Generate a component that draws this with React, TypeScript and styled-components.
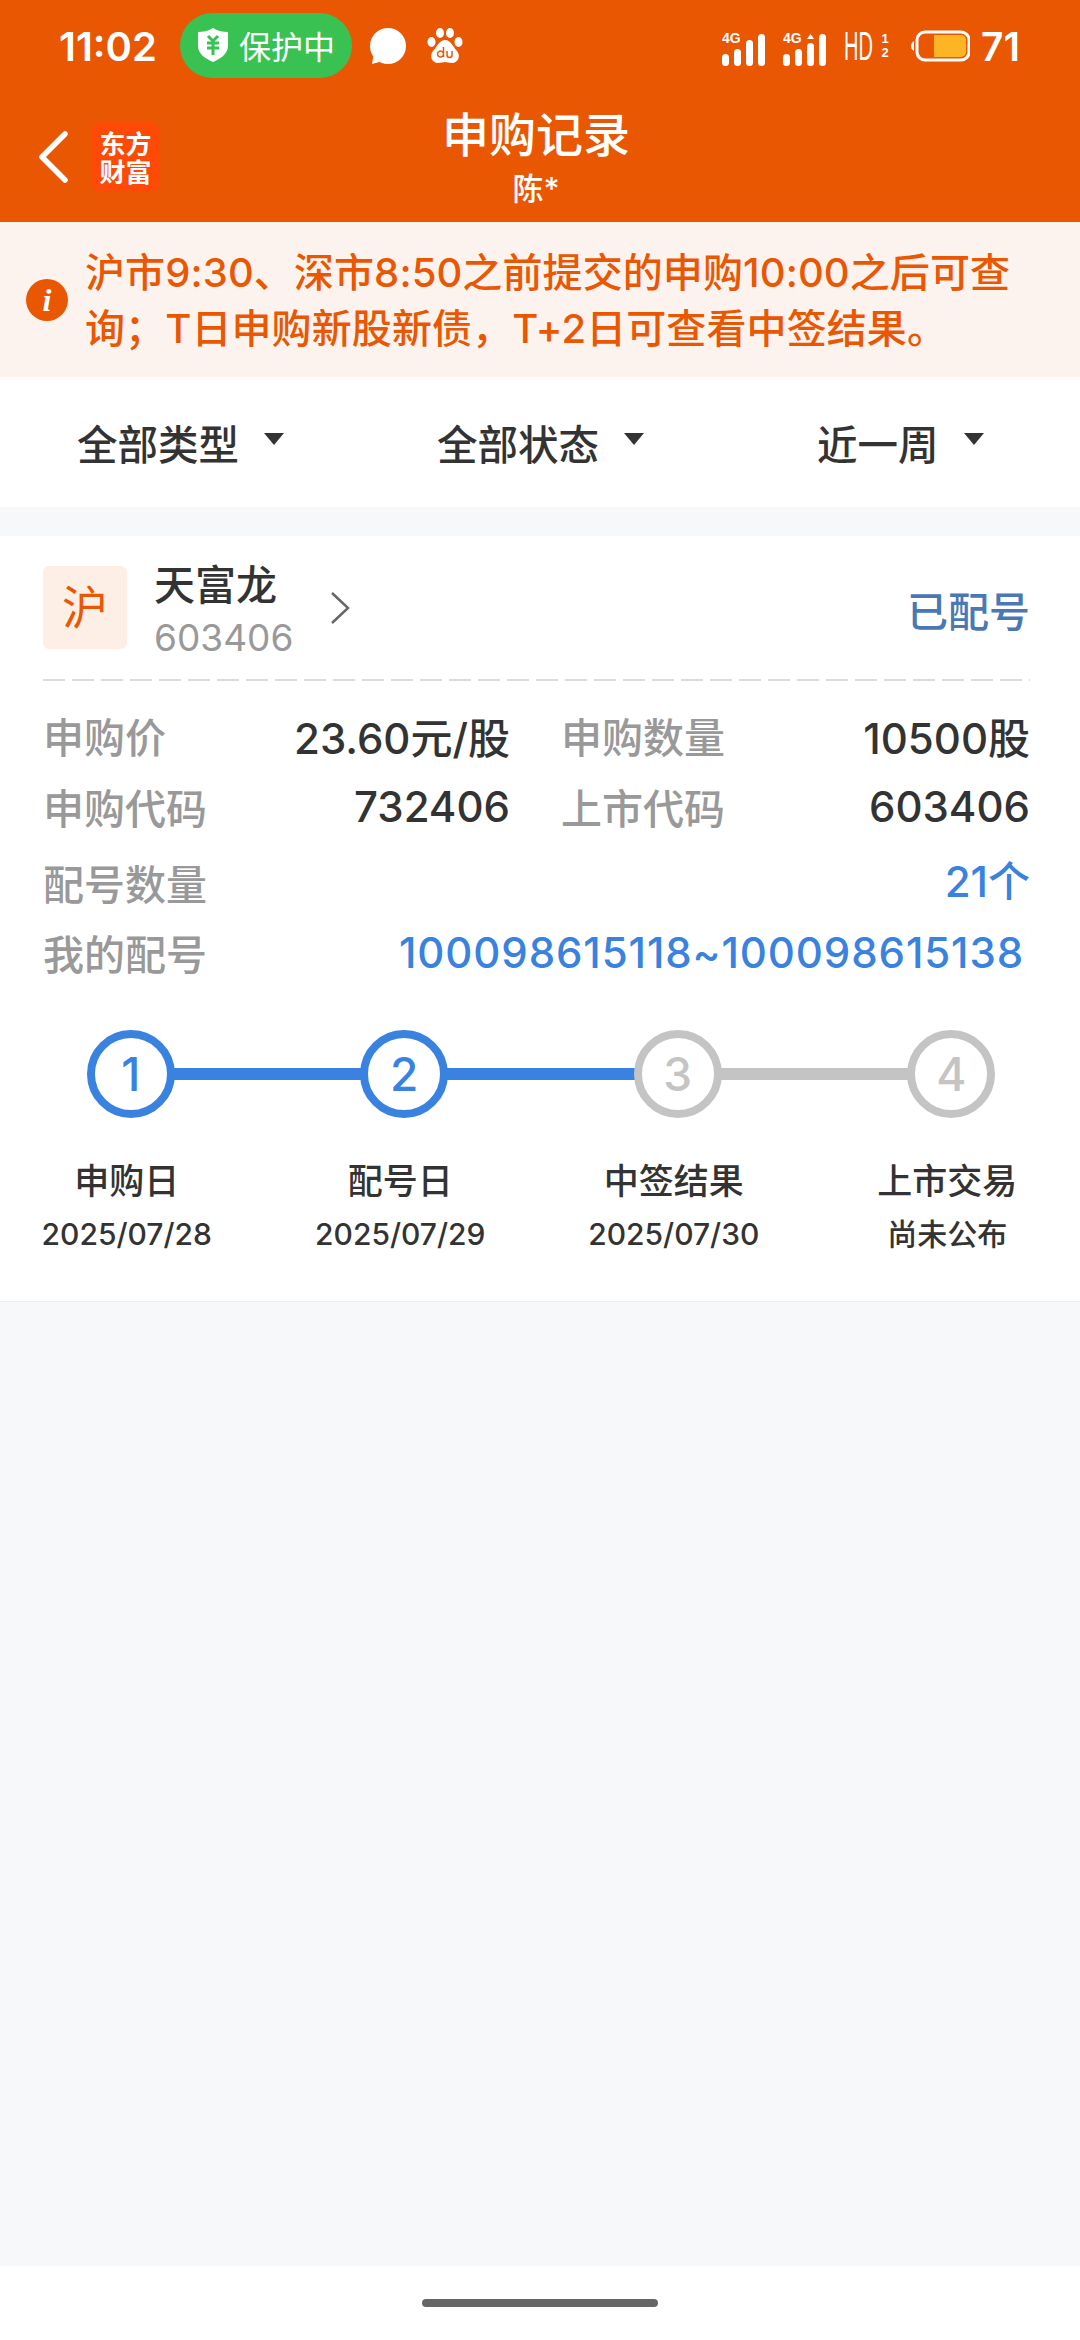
import React from 'react'
import styled, { createGlobalStyle } from 'styled-components'

const SANS = `"Inter", "Noto Sans CJK SC", "Liberation Sans", sans-serif`

const GlobalStyle = createGlobalStyle`
  html, body { margin: 0; padding: 0; background: #f7f8fa; }
  body { font-family: ${SANS}; }
`

const Page = styled.div`
  width: 1080px;
  height: 2340px;
  display: flex;
  flex-direction: column;
  background: #f7f8fa;
  overflow: hidden;
`

const Header = styled.header`
  height: 222px;
  background: #e95703;
  color: #fff;
  flex: none;
  display: flex;
  flex-direction: column;
`

const StatusBar = styled.div`
  height: 92px;
  display: flex;
  align-items: center;
  padding: 0 60px 0 59px;
`

const Time = styled.span`
  font-size: 40px;
  font-weight: 600;
  width: 121px;
`

const GuardPill = styled.div`
  width: 172px;
  height: 65px;
  margin-top: -2px;
  border-radius: 33px;
  background: #39c252;
  display: flex;
  align-items: center;
  gap: 11px;
  padding-left: 18px;
  box-sizing: border-box;
  font-size: 32px;
  margin-right: 17px;
`

const StatusIcons = styled.div`
  display: flex;
  align-items: center;
  gap: 21px;
  flex: 1;
`

const SystemIcons = styled.div`
  display: flex;
  align-items: center;
  gap: 18px;
`

const SignalSvg = styled.svg`
  width: 43px;
  height: 36px;
  margin-top: 4px;
`

const HdMark = styled.div`
  display: flex;
  align-items: center;
  width: 48px;
  height: 32px;
`

const HdLetters = styled.span`
  width: 36px;
  font-family: "Liberation Sans", sans-serif;
  font-size: 40px;
  line-height: 32px;
  transform: scaleX(0.5);
  transform-origin: left center;
`

const HdFraction = styled.span`
  display: flex;
  flex-direction: column;
  align-items: center;
  width: 10px;
  font-family: "Liberation Sans", sans-serif;
  font-size: 13px;
  line-height: 14px;
  font-weight: 700;
`

const Battery = styled.span`
  font-size: 39px;
  font-weight: 600;
  margin-left: -7px;
`

const NavBar = styled.div`
  height: 130px;
  position: relative;
  display: flex;
  align-items: flex-start;
  padding: 30px 0 0 38px;
  gap: 21px;
  box-sizing: border-box;
`

const BackIcon = styled.svg`
  width: 32px;
  height: 52px;
  margin-top: 9px;
`

const Logo = styled.div`
  width: 69px;
  height: 70px;
  border-radius: 10px;
  background: #fd4a06;
  font-family: "Noto Sans CJK SC", serif;
  font-weight: 700;
  font-size: 26px;
  line-height: 28px;
  text-align: center;
  padding-top: 7px;
  box-sizing: border-box;
`

const NavTitle = styled.div`
  position: absolute;
  left: 200px;
  right: 208px;
  top: 12px;
  text-align: center;
`

const TitleText = styled.div`
  font-size: 47px;
  line-height: 62px;
  font-weight: 500;
`

const SubTitle = styled.div`
  font-size: 31px;
  line-height: 38px;
  font-weight: 500;
  margin-top: 4px;
`

const Notice = styled.div`
  height: 155px;
  flex: none;
  background: #fdf3ee;
  display: flex;
  align-items: center;
  padding: 0 0 0 26px;
  box-sizing: border-box;
`

const NoticeDot = styled.div`
  width: 42px;
  height: 42px;
  flex: none;
  border-radius: 50%;
  background: #e95703;
  color: #fff;
  font-family: "Liberation Serif", serif;
  font-style: italic;
  font-weight: 700;
  font-size: 32px;
  line-height: 42px;
  text-align: center;
  margin-right: 17px;
`

const NoticeText = styled.div`
  color: #e95703;
  font-size: 40px;
  font-weight: 500;
  line-height: 56px;
  letter-spacing: 0.1px;
  white-space: nowrap;
  padding-top: 3px;
`

const Filters = styled.div`
  height: 130px;
  flex: none;
  background: #fff;
  display: grid;
  grid-template-columns: 360px 380px 1fr;
  align-items: center;
  padding-left: 77px;
  box-sizing: border-box;
`

const Filter = styled.div`
  display: flex;
  align-items: center;
  gap: 25px;
  color: #333;
  font-size: 40.5px;
  font-weight: 500;
`

const Caret = styled.span`
  width: 0;
  height: 0;
  border-left: 10px solid transparent;
  border-right: 10px solid transparent;
  border-top: 12px solid #333;
  margin-bottom: 6px;
`

const Card = styled.section`
  margin-top: 29px;
  height: 766px;
  flex: none;
  background: #fff;
  padding: 30px 50px 0 43px;
  box-sizing: border-box;
  border-bottom: 1px solid #eeeeee;
`

const StockRow = styled.div`
  display: flex;
  align-items: flex-start;
  height: 115px;
  background: repeating-linear-gradient(90deg, #dcdcdc 0 22px, transparent 22px 29px) left bottom / 100% 2px no-repeat;
`

const Market = styled.div`
  width: 84px;
  height: 83px;
  border-radius: 6px;
  background: #fdeee6;
  color: #e95703;
  font-size: 46px;
  line-height: 83px;
  text-align: center;
  margin-right: 27px;
`

const StockName = styled.div`
  font-size: 41px;
  line-height: 46px;
  font-weight: 500;
  color: #333;
  margin-top: -4px;
`

const StockCode = styled.div`
  font-size: 37px;
  line-height: 50px;
  color: #999;
  margin-top: 5px;
`

const Chevron = styled.svg`
  width: 22px;
  height: 36px;
  margin: 24px 0 0 36px;
`

const Status = styled.div`
  margin-left: auto;
  margin-top: 20px;
  color: #4a78b5;
  font-size: 41px;
  font-weight: 500;
  line-height: 52px;
`

const Details = styled.div`
  padding-top: 19px;
`

const Row = styled.div<{ $height: number }>`
  display: flex;
  align-items: center;
  height: ${({ $height }) => $height}px;
`

const Label = styled.span`
  color: #999;
  font-size: 41px;
  font-weight: 500;
  flex: none;
`

const Value = styled.span<{ $blue?: boolean; $lift?: number }>`
  margin-left: auto;
  margin-bottom: ${({ $lift }) => $lift || 0}px;
  color: ${({ $blue }) => ($blue ? '#3a82e0' : '#333')};
  font-size: 42px;
  font-weight: 500;
  white-space: nowrap;
`

const RangeValue = styled(Value)`
  margin-right: 6px;
  letter-spacing: 0.9px;
`

const LeftPair = styled.div`
  display: flex;
  align-items: center;
  width: 467px;
  margin-right: 51px;
  flex: none;
`

const RightPair = styled.div`
  display: flex;
  align-items: center;
  flex: 1;
`

const Steps = styled.div`
  display: grid;
  grid-template-columns: repeat(4, 273.5px);
  margin: 48px 0 0 -49px;
`

const Step = styled.div`
  display: flex;
  flex-direction: column;
  align-items: center;
  position: relative;
`

const Connector = styled.span<{ $on: boolean }>`
  position: absolute;
  left: 50%;
  width: 100%;
  top: 38px;
  height: 12px;
  background: ${({ $on }) => ($on ? '#3a82e0' : '#c4c4c4')};
`

const Circle = styled.div<{ $on: boolean }>`
  position: relative;
  width: 88px;
  height: 88px;
  border-radius: 50%;
  border: 8px solid ${({ $on }) => ($on ? '#3a82e0' : '#c4c4c4')};
  background: #fff;
  color: ${({ $on }) => ($on ? '#3a82e0' : '#c4c4c4')};
  box-sizing: border-box;
  font-size: 46px;
  font-weight: 500;
  line-height: 72px;
  text-align: center;
`

const StepName = styled.div`
  margin-top: 40px;
  padding-right: 8px;
  font-size: 35px;
  line-height: 46px;
  font-weight: 500;
  color: #333;
`

const StepDate = styled.div`
  margin-top: 10px;
  padding-right: 8px;
  font-size: 30px;
  line-height: 40px;
  color: #333;
  font-weight: 500;
`

const Spacer = styled.div`
  flex: 1;
`

const BottomBar = styled.div`
  height: 74px;
  flex: none;
  background: #fff;
  display: flex;
  justify-content: center;
  padding-top: 33px;
  box-sizing: border-box;
`

const HomeHandle = styled.div`
  width: 236px;
  height: 8px;
  border-radius: 4px;
  background: #666;
`

const ShieldIcon = () => (
  <svg width="30" height="34" viewBox="0 0 30 34">
    <path d="M15 0 C20 3 25 4 30 4 V18 C30 26 22 31 15 34 C8 31 0 26 0 18 V4 C5 4 10 3 15 0 Z" fill="#fff" />
    <path d="M10 8 L15 13 L20 8 M9 15 H21 M9 20 H21 M15 13 V27" stroke="#39c252" strokeWidth="3" fill="none" />
  </svg>
)

const BubbleIcon = () => (
  <svg width="37" height="37" viewBox="0 0 37 37">
    <circle cx="19" cy="18" r="18" fill="#fff" />
    <path d="M5 24 L3 36 L14 33 Z" fill="#fff" />
  </svg>
)

const PawIcon = () => (
  <svg width="36" height="36" viewBox="0 0 36 36">
    <ellipse cx="4.5" cy="14" rx="4" ry="5" fill="#fff" />
    <ellipse cx="13" cy="5" rx="4" ry="5" fill="#fff" />
    <ellipse cx="23" cy="5" rx="4" ry="5" fill="#fff" />
    <ellipse cx="31.5" cy="14" rx="4" ry="5" fill="#fff" />
    <path d="M18 12 C24 12 26 19 30 23 C34 28 31 35 25 35 C22 35 20 34 18 34 C16 34 14 35 11 35 C5 35 2 28 6 23 C10 19 12 12 18 12 Z" fill="#fff" />
    <path d="M16.5 19 V29 M16.5 26 a3 3 0 1 1 -0.01 -0.2 M20 23 V27 a2.5 2.5 0 0 0 5 0 V23" stroke="#e95703" strokeWidth="1.5" fill="none" />
  </svg>
)

const SignalIcon = ({ up }: { up?: boolean }) => (
  <SignalSvg viewBox="0 -4 43 36" fill="#fff">
    <text x="0" y="9" fontSize="14" fontWeight="700" fontFamily="Liberation Sans, sans-serif">4G</text>
    <rect x="0" y="20" width="7" height="12" rx="3.5" />
    <rect x="12" y="15" width="7" height="17" rx="3.5" />
    <rect x="24" y={up ? 9 : 6} width="7" height={up ? 23 : 26} rx="3.5" />
    <rect x="36" y="0" width="7" height="32" rx="3.5" />
    {up && <path d="M27.5 0 L31 5 H24 Z" />}
  </SignalSvg>
)

const HdIcon = () => (
  <HdMark>
    <HdLetters>HD</HdLetters>
    <HdFraction>
      <span>1</span>
      <span>2</span>
    </HdFraction>
  </HdMark>
)

const BatteryIcon = () => (
  <svg width="60" height="32" viewBox="0 0 60 32">
    <path d="M4 11 C0 13 0 19 4 21 Z" fill="#fff" />
    <rect x="7" y="2" width="52" height="28" rx="8" fill="none" stroke="#fff" strokeWidth="3" />
    <path d="M24 5 H51 a5 5 0 0 1 5 5 V22 a5 5 0 0 1 -5 5 H24 Z" fill="#fdb525" />
  </svg>
)

const STEPS = [
  { n: 1, name: '申购日', date: '2025/07/28', on: true, line: true },
  { n: 2, name: '配号日', date: '2025/07/29', on: true, line: true },
  { n: 3, name: '中签结果', date: '2025/07/30', on: false, line: false },
  { n: 4, name: '上市交易', date: '尚未公布', on: false, line: false },
]

const App: React.FC = () => {
  return (
    <Page>
      <GlobalStyle />
      <Header>
        <StatusBar>
          <Time>11:02</Time>
          <GuardPill>
            <ShieldIcon />
            保护中
          </GuardPill>
          <StatusIcons>
            <BubbleIcon />
            <PawIcon />
          </StatusIcons>
          <SystemIcons>
            <SignalIcon />
            <SignalIcon up />
            <HdIcon />
            <BatteryIcon />
            <Battery>71</Battery>
          </SystemIcons>
        </StatusBar>
        <NavBar>
          <BackIcon viewBox="0 0 32 52">
            <path d="M27 3 L4 26 L27 49" stroke="#fff" strokeWidth="5.5" fill="none" strokeLinecap="round" strokeLinejoin="round" />
          </BackIcon>
          <Logo>
            东方
            <br />
            财富
          </Logo>
          <NavTitle>
            <TitleText>申购记录</TitleText>
            <SubTitle>陈*</SubTitle>
          </NavTitle>
        </NavBar>
      </Header>

      <Notice>
        <NoticeDot>i</NoticeDot>
        <NoticeText>
          沪市9:30、深市8:50之前提交的申购10:00之后可查
          <br />
          询；T日申购新股新债，T+2日可查看中签结果。
        </NoticeText>
      </Notice>

      <Filters>
        <Filter>
          全部类型
          <Caret />
        </Filter>
        <Filter>
          全部状态
          <Caret />
        </Filter>
        <Filter>
          近一周
          <Caret />
        </Filter>
      </Filters>

      <Card>
        <StockRow>
          <Market>沪</Market>
          <div>
            <StockName>天富龙</StockName>
            <StockCode>603406</StockCode>
          </div>
          <Chevron viewBox="0 0 22 36">
            <path d="M3 3 L19 18 L3 33" stroke="#666" strokeWidth="2.5" fill="none" />
          </Chevron>
          <Status>已配号</Status>
        </StockRow>
        <Details>
          <Row $height={70}>
            <LeftPair>
              <Label>申购价</Label>
              <Value>23.60元/股</Value>
            </LeftPair>
            <RightPair>
              <Label>申购数量</Label>
              <Value>10500股</Value>
            </RightPair>
          </Row>
          <Row $height={72}>
            <LeftPair>
              <Label>申购代码</Label>
              <Value>732406</Value>
            </LeftPair>
            <RightPair>
              <Label>上市代码</Label>
              <Value>603406</Value>
            </RightPair>
          </Row>
          <Row $height={80}>
            <Label>配号数量</Label>
            <Value $blue $lift={8}>21个</Value>
          </Row>
          <Row $height={60}>
            <Label>我的配号</Label>
            <RangeValue $blue>100098615118~100098615138</RangeValue>
          </Row>
        </Details>
        <Steps>
          {STEPS.map((s, i) => (
            <Step key={s.n}>
              {i < 3 && <Connector $on={s.line} />}
              <Circle $on={s.on}>{s.n}</Circle>
              <StepName>{s.name}</StepName>
              <StepDate>{s.date}</StepDate>
            </Step>
          ))}
        </Steps>
      </Card>

      <Spacer />
      <BottomBar>
        <HomeHandle />
      </BottomBar>
    </Page>
  )
}

export default App
